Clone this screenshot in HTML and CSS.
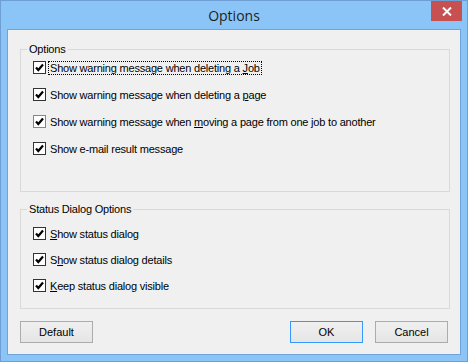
FILE: index.html
```html
<!DOCTYPE html>
<html lang="en">
<head>
  <meta charset="UTF-8">
  <title>Options</title>
  <link rel="stylesheet" href="styles.css">
</head>
<body>

  <div class="window">
    <div class="titlebar">
      <span class="title">Options</span>
      <button class="close" aria-label="Close">
        <svg width="10" height="9" viewBox="0 0 10 9"><path d="M1 0.5 L9 8.5 M9 0.5 L1 8.5" stroke="#fff" stroke-width="2" fill="none"/></svg>
      </button>
    </div>

    <div class="client">
      <fieldset class="group group-options">
        <legend>Options</legend>
        <div class="row">
          <span class="check"></span>
          <span class="label focus">Show warning message when deleting a <u>J</u>ob</span>
        </div>
        <div class="row">
          <span class="check"></span>
          <span class="label">Show warning message when deleting a <u>p</u>age</span>
        </div>
        <div class="row">
          <span class="check hover"></span>
          <span class="label">Show warning message when <u>m</u>oving a page from one job to another</span>
        </div>
        <div class="row">
          <span class="check"></span>
          <span class="label">Show e-mail result message</span>
        </div>
      </fieldset>

      <fieldset class="group group-status">
        <legend>Status Dialog Options</legend>
        <div class="row">
          <span class="check"></span>
          <span class="label"><u>S</u>how status dialog</span>
        </div>
        <div class="row">
          <span class="check"></span>
          <span class="label">S<u>h</u>ow status dialog details</span>
        </div>
        <div class="row row-wide">
          <span class="check"></span>
          <span class="label"><u>K</u>eep status dialog visible</span>
        </div>
      </fieldset>

      <div class="buttons">
        <button class="btn">Default</button>
        <div class="spacer"></div>
        <button class="btn btn-default">OK</button>
        <button class="btn">Cancel</button>
      </div>
    </div>
  </div>

</body>
</html>
```

FILE: styles.css
```css
body {
  margin: 0;
  font-family: "Liberation Sans", Arial, sans-serif;
  font-size: 11px;
  color: #000;
}

.window {
  width: 468px;
  height: 362px;
  box-sizing: border-box;
  border: 1px solid #6f9fd2;
  background-color: #8bc5f7;
  padding: 0 6px 6px 6px;
}

.titlebar {
  position: relative;
  height: 28px;
  display: flex;
  justify-content: center;
  align-items: center;
}

.title {
  font-family: "Open Sans", "Noto Sans", sans-serif;
  font-size: 14px;
  color: #1e1e1e;
  margin-top: 1px;
}

.close {
  position: absolute;
  top: 0;
  right: -1px;
  width: 31px;
  height: 20px;
  border: none;
  padding: 0;
  background-color: #c75050;
  display: flex;
  justify-content: center;
  align-items: center;
}

.client {
  height: 326px;
  box-sizing: border-box;
  border: 1px solid #70a3d8;
  background-color: #f0f0f0;
  padding: 13px 10px 0 12px;
}

.group {
  margin: 0;
  padding: 0 0 0 12px;
  border: 1px solid #d9d9d9;
  min-inline-size: 0;
}

.group legend {
  margin-left: -6px;
  padding: 0 2px;
  line-height: 13px;
  letter-spacing: -0.2px;
}

.group-options {
  height: 149px;
  box-sizing: border-box;
  padding-top: 5px;
}

.group-status {
  margin-top: 11px;
  height: 106px;
  box-sizing: border-box;
  padding-top: 11px;
}

.row {
  display: flex;
  align-items: center;
  height: 13px;
  margin-bottom: 14px;
}

.group-status .row {
  margin-bottom: 13px;
}

.group-status .row-wide {
  margin-top: 4px;
}

.check {
  width: 13px;
  height: 13px;
  box-sizing: border-box;
  border: 1px solid #333;
  background-color: #fff;
  background-image: url("data:image/svg+xml,%3Csvg xmlns='http://www.w3.org/2000/svg' width='11' height='11' viewBox='0 0 11 11'%3E%3Cpath d='M2 5.5 L4.3 8 L9 2.5' stroke='%23000' stroke-width='2.2' fill='none'/%3E%3C/svg%3E");
  background-repeat: no-repeat;
  flex-shrink: 0;
}

.check.hover {
  border-color: #3399ff;
}

.label {
  margin-left: 2px;
  padding: 0 1px;
  line-height: 12px;
  letter-spacing: -0.2px;
  border: 1px dotted transparent;
  white-space: nowrap;
}

.label.focus {
  border-color: #000;
}

.buttons {
  display: flex;
  margin-top: 12px;
  padding-right: 2px;
}

.spacer {
  flex: 1;
}

.btn {
  width: 73px;
  height: 22px;
  margin: 0;
  padding: 0;
  font-family: "Liberation Sans", Arial, sans-serif;
  font-size: 11px;
  color: #000;
  border: 1px solid #acacac;
  background: linear-gradient(#f0f0f0, #e5e5e5);
}

.btn-default {
  border-color: #3399ff;
  margin-right: 12px;
}
```
